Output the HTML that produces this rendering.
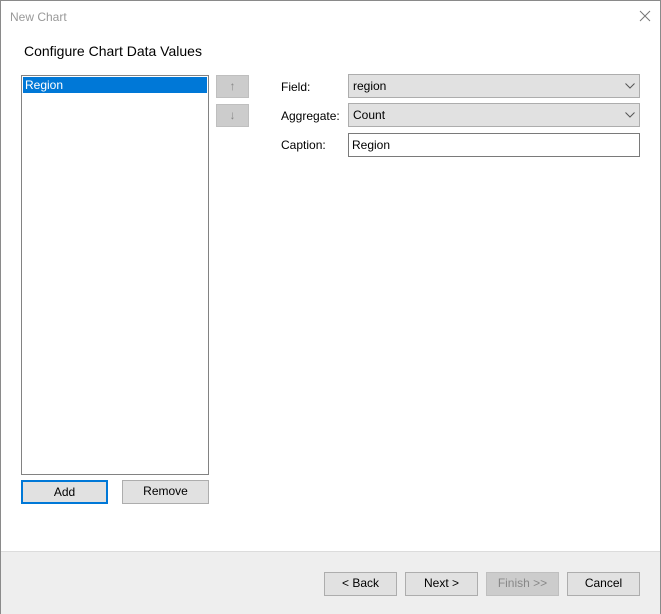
<!DOCTYPE html>
<html><head><style>
body{margin:0;width:661px;height:614px;overflow:hidden;background:#fff;font-family:"Liberation Sans",sans-serif;font-size:12px;color:#000}
.win{position:absolute;left:0;top:0;width:659px;height:612px;border:1px solid #8a8a8a;background:#fff}
.a{position:absolute}
.btn{position:absolute;box-sizing:border-box;border:1px solid #adadad;background:#e1e1e1;text-align:center;line-height:21px;font-size:12px}
.combo{position:absolute;box-sizing:border-box;border:1px solid #adadad;background:#e1e1e1;height:24px;line-height:22px;padding-left:4px}
.combo svg{position:absolute;right:4px;top:8px}
</style></head><body>
<div class="win">
<div class="a" style="left:9px;top:9px;color:#999;font-size:12px">New Chart</div>
<svg class="a" style="left:638px;top:9px" width="12" height="12"><path d="M1 1L11 11M11 1L1 11" stroke="#777" stroke-width="1"/></svg>
<div class="a" style="left:23px;top:42px;font-size:14px">Configure Chart Data Values</div>
<div class="a" style="left:20px;top:74px;width:186px;height:398px;border:1px solid #828282"></div>
<div class="a" style="left:22px;top:76px;width:184px;height:16px;background:#0078d7;color:#fff;line-height:16px;padding-left:2px;box-sizing:border-box">Region</div>
<div class="btn" style="left:215px;top:74px;width:33px;height:23px;background:#ccc;border-color:#bfbfbf;color:#888">↑</div>
<div class="btn" style="left:215px;top:103px;width:33px;height:23px;background:#ccc;border-color:#bfbfbf;color:#888">↓</div>
<div class="a" style="left:280px;top:79px">Field:</div>
<div class="a" style="left:280px;top:108px">Aggregate:</div>
<div class="a" style="left:280px;top:137px">Caption:</div>
<div class="combo" style="left:347px;top:73px;width:292px">region<svg width="10" height="6"><path d="M0.5 0.5L5 5L9.5 0.5" fill="none" stroke="#555"/></svg></div>
<div class="combo" style="left:347px;top:102px;width:292px">Count<svg width="10" height="6"><path d="M0.5 0.5L5 5L9.5 0.5" fill="none" stroke="#555"/></svg></div>
<div class="combo" style="left:347px;top:132px;width:292px;background:#fff;border-color:#7a7a7a;padding-left:3px">Region</div>
<div class="btn" style="left:20px;top:479px;width:87px;height:24px;border:2px solid #0078d7;line-height:20px">Add</div>
<div class="btn" style="left:121px;top:479px;width:87px;height:24px">Remove</div>
<div class="a" style="left:0;top:550px;width:659px;height:62px;background:#eeeeee;border-top:1px solid #dcdcdc"></div>
<div class="btn" style="left:323px;top:571px;width:73px;height:24px">&lt; Back</div>
<div class="btn" style="left:404px;top:571px;width:73px;height:24px">Next &gt;</div>
<div class="btn" style="left:485px;top:571px;width:73px;height:24px;background:#ccc;border-color:#bfbfbf;color:#888">Finish &gt;&gt;</div>
<div class="btn" style="left:566px;top:571px;width:73px;height:24px">Cancel</div>
</div>
</body></html>
